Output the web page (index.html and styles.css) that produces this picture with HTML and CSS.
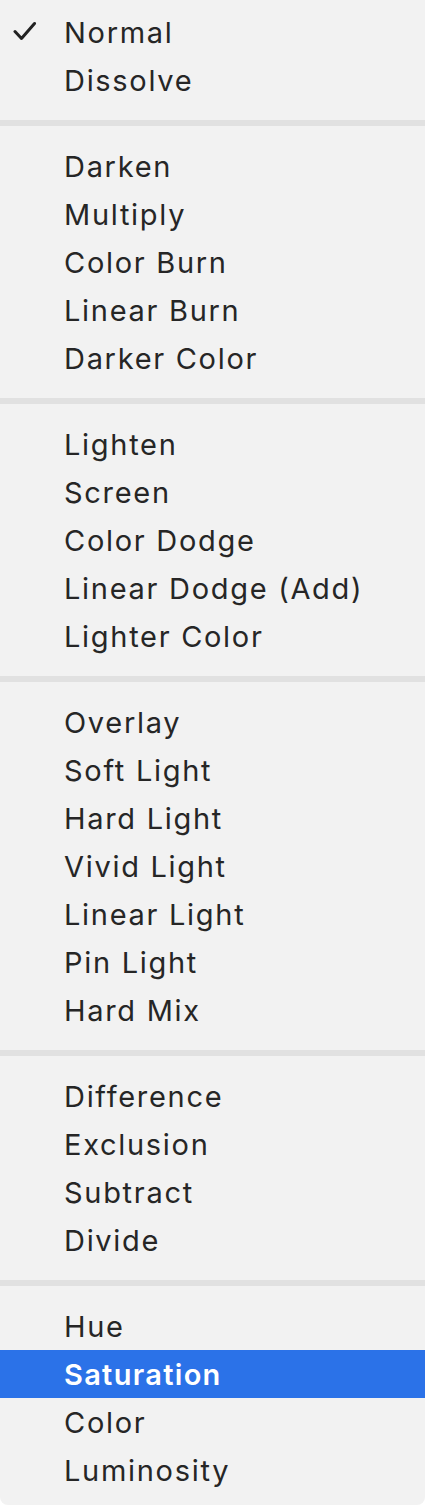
FILE: index.html
```html
<!DOCTYPE HTML>
<html>
<head>
    <meta charset="utf-8">
    <title>Blend Modes</title>
    <link rel="stylesheet" href="styles.css">
</head>
<body>
    <div class="menu">
        <div class="item checked">
            <svg class="check" width="24" height="20" viewBox="0 0 24 20">
                <path d="M2 10.5 L8.5 17.5 L21.5 2.5" fill="none" stroke="#222" stroke-width="3" stroke-linecap="round" stroke-linejoin="round"/>
            </svg>
            <span>Normal</span>
        </div>
        <div class="item"><span>Dissolve</span></div>
        <div class="sep"></div>
        <div class="item"><span>Darken</span></div>
        <div class="item"><span>Multiply</span></div>
        <div class="item"><span>Color Burn</span></div>
        <div class="item"><span>Linear Burn</span></div>
        <div class="item"><span>Darker Color</span></div>
        <div class="sep"></div>
        <div class="item"><span>Lighten</span></div>
        <div class="item"><span>Screen</span></div>
        <div class="item"><span>Color Dodge</span></div>
        <div class="item"><span>Linear Dodge (Add)</span></div>
        <div class="item"><span>Lighter Color</span></div>
        <div class="sep"></div>
        <div class="item"><span>Overlay</span></div>
        <div class="item"><span>Soft Light</span></div>
        <div class="item"><span>Hard Light</span></div>
        <div class="item"><span>Vivid Light</span></div>
        <div class="item"><span>Linear Light</span></div>
        <div class="item"><span>Pin Light</span></div>
        <div class="item"><span>Hard Mix</span></div>
        <div class="sep"></div>
        <div class="item"><span>Difference</span></div>
        <div class="item"><span>Exclusion</span></div>
        <div class="item"><span>Subtract</span></div>
        <div class="item"><span>Divide</span></div>
        <div class="sep"></div>
        <div class="item"><span>Hue</span></div>
        <div class="item selected"><span>Saturation</span></div>
        <div class="item"><span>Color</span></div>
        <div class="item"><span>Luminosity</span></div>
    </div>
</body>
</html>
```

FILE: styles.css
```css
html, body {
    margin: 0;
    padding: 0;
    background: #ffffff;
}

.menu {
    width: 425px;
    background: #f2f2f2;
    padding: 8px 0 11px;
    border-radius: 0 0 8px 8px;
    font-family: Inter, "Liberation Sans", sans-serif;
    font-size: 29px;
    letter-spacing: 1.7px;
    color: #262626;
}

.item {
    position: relative;
    height: 48px;
    display: flex;
    align-items: center;
    padding-left: 64px;
}

.check {
    position: absolute;
    left: 13px;
    top: 13px;
}

.selected {
    background: #2b72e8;
    color: #ffffff;
    font-weight: 600;
    letter-spacing: 1.3px;
}

.sep {
    height: 6px;
    margin: 16px 0;
    background: #e1e1e1;
}
```
